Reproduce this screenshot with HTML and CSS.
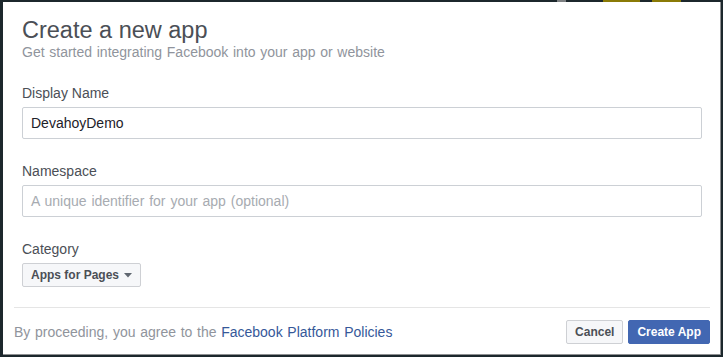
FILE: index.html
```html
<!DOCTYPE html>
<html lang="en">
<head>
<meta charset="utf-8">
<title>Create a new app</title>
<link rel="stylesheet" href="styles.css">
</head>
<body>
<div class="strip"></div>
<div class="dialog">
  <div class="body">
    <h1 class="title">Create a new app</h1>
    <p class="sub">Get started integrating Facebook into your app or website</p>

    <div class="field">
      <label class="label">Display Name</label>
      <div class="input">DevahoyDemo</div>
    </div>

    <div class="field">
      <label class="label">Namespace</label>
      <div class="input placeholder">A unique identifier for your app (optional)</div>
    </div>

    <div class="field last">
      <label class="label">Category</label>
      <div class="select">
        <span>Apps for Pages</span>
        <svg class="caret" width="8" height="5" viewBox="0 0 8 5"><path d="M0 0H8L4 4.5Z" fill="#606770"/></svg>
      </div>
    </div>
  </div>
  <div class="footer">
    <p class="terms">By proceeding, you agree to the <a class="link">Facebook Platform Policies</a></p>
    <div class="actions">
      <button class="btn">Cancel</button>
      <button class="btn primary">Create App</button>
    </div>
  </div>
</div>
</body>
</html>
```

FILE: styles.css
```css
* { box-sizing: border-box; }

html, body {
  margin: 0;
  padding: 0;
}

body {
  background: #1c272c;
  font-family: "Liberation Sans", Arial, Helvetica, sans-serif;
  width: 723px;
  height: 357px;
  overflow: hidden;
}

.strip {
  height: 2px;
  background: linear-gradient(to right,
    #1c272c 0, #1c272c 557px,
    #7d8082 557px, #7d8082 566px,
    #1c272c 566px, #1c272c 603px,
    #8a7a06 603px, #8a7a06 640px,
    #1c272c 640px, #1c272c 652px,
    #8a7a06 652px, #8a7a06 681px,
    #1c272c 681px);
}

.dialog {
  width: 718px;
  height: 353px;
  margin-left: 3px;
  background: #fff;
  border-right: 1px solid #8e9092;
  border-bottom: 1px solid #8e9092;
  display: flex;
  flex-direction: column;
}

.body {
  padding: 14px 18px 0 19px;
}

.title {
  margin: 0;
  font-size: 23.5px;
  line-height: 28px;
  font-weight: normal;
  color: #4b4f56;
}

.sub {
  margin: 0 0 23px;
  font-size: 14px;
  line-height: 17px;
  word-spacing: 0.8px;
  color: #90949c;
}

.field {
  margin-bottom: 23px;
}

.field.last {
  margin-bottom: 20px;
}

.label {
  display: block;
  margin-bottom: 5px;
  font-size: 14px;
  line-height: 18px;
  color: #4b4f56;
}

.input {
  height: 32px;
  border: 1px solid #ccd0d5;
  border-radius: 2px;
  padding: 0 8px;
  font-size: 14px;
  line-height: 30px;
  color: #1d2129;
}

.input.placeholder {
  color: #a7abb1;
  word-spacing: 1px;
}

.select {
  display: inline-flex;
  align-items: center;
  height: 24px;
  padding: 0 8px 0 8px;
  border: 1px solid #ced0d4;
  border-radius: 2px;
  background: #f6f7f9;
  font-size: 12px;
  font-weight: bold;
  color: #4b4f56;
}

.caret {
  margin-left: 5px;
}

.footer {
  margin: 0 10px 0 11px;
  border-top: 1px solid #e5e5e5;
  padding: 12px 0 10px;
  display: flex;
  align-items: center;
  justify-content: space-between;
}

.terms {
  margin: 0;
  font-size: 14px;
  line-height: 18px;
  word-spacing: 0.8px;
  color: #90949c;
}

.link {
  color: #365899;
  text-decoration: none;
}

.actions {
  display: flex;
  gap: 5px;
}

.btn {
  height: 24px;
  padding: 0 8px;
  border: 1px solid #ced0d4;
  border-radius: 2px;
  background: #f6f7f9;
  font-family: "Liberation Sans", Arial, Helvetica, sans-serif;
  font-size: 12px;
  font-weight: bold;
  line-height: 22px;
  color: #4b4f56;
}

.btn.primary {
  background: #4267b2;
  border-color: #4267b2;
  color: #fff;
}
```
